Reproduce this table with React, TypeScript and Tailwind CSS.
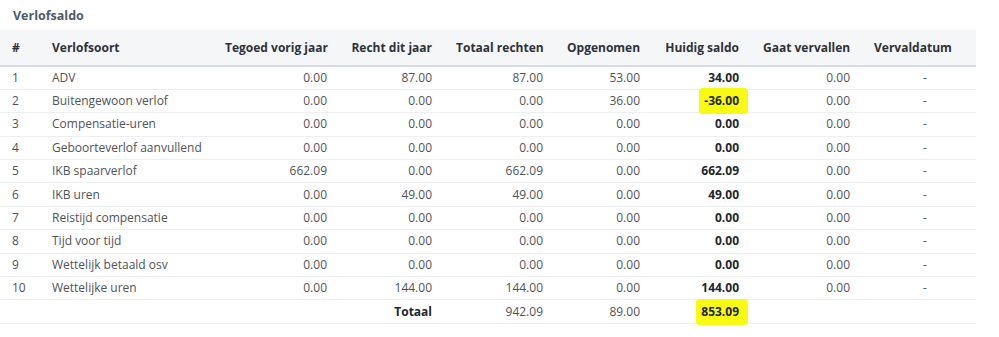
import React from "react";

type Row = {
  nr: number;
  soort: string;
  tegoed: string;
  recht: string;
  totaal: string;
  opgenomen: string;
  saldo: string;
  vervallen: string;
  mark?: boolean;
};

const rows: Row[] = [
  { nr: 1, soort: "ADV", tegoed: "0.00", recht: "87.00", totaal: "87.00", opgenomen: "53.00", saldo: "34.00", vervallen: "0.00" },
  { nr: 2, soort: "Buitengewoon verlof", tegoed: "0.00", recht: "0.00", totaal: "0.00", opgenomen: "36.00", saldo: "-36.00", vervallen: "0.00", mark: true },
  { nr: 3, soort: "Compensatie-uren", tegoed: "0.00", recht: "0.00", totaal: "0.00", opgenomen: "0.00", saldo: "0.00", vervallen: "0.00" },
  { nr: 4, soort: "Geboorteverlof aanvullend", tegoed: "0.00", recht: "0.00", totaal: "0.00", opgenomen: "0.00", saldo: "0.00", vervallen: "0.00" },
  { nr: 5, soort: "IKB spaarverlof", tegoed: "662.09", recht: "0.00", totaal: "662.09", opgenomen: "0.00", saldo: "662.09", vervallen: "0.00" },
  { nr: 6, soort: "IKB uren", tegoed: "0.00", recht: "49.00", totaal: "49.00", opgenomen: "0.00", saldo: "49.00", vervallen: "0.00" },
  { nr: 7, soort: "Reistijd compensatie", tegoed: "0.00", recht: "0.00", totaal: "0.00", opgenomen: "0.00", saldo: "0.00", vervallen: "0.00" },
  { nr: 8, soort: "Tijd voor tijd", tegoed: "0.00", recht: "0.00", totaal: "0.00", opgenomen: "0.00", saldo: "0.00", vervallen: "0.00" },
  { nr: 9, soort: "Wettelijk betaald osv", tegoed: "0.00", recht: "0.00", totaal: "0.00", opgenomen: "0.00", saldo: "0.00", vervallen: "0.00" },
  { nr: 10, soort: "Wettelijke uren", tegoed: "0.00", recht: "144.00", totaal: "144.00", opgenomen: "0.00", saldo: "144.00", vervallen: "0.00" },
];

// yellow marker highlight, as in the screenshot
function Marker({ children }: { children: React.ReactNode }) {
  return (
    <span className="relative inline-block">
      <span className="absolute -left-[5px] -right-[9px] -top-[4px] -bottom-[4px] rounded-[4px] bg-[#f8fa14]" />
      <span className="relative">{children}</span>
    </span>
  );
}

export default function App() {
  return (
    <div className="w-[999px] h-[337px] bg-white font-['Open_Sans',sans-serif] text-[12px]">
      <div className="pl-[13px] pt-[7px] h-[30px] font-bold text-[12.5px] text-[#4d5b6b]">Verlofsaldo</div>

      <table className="w-[976px] table-fixed border-collapse">
        <colgroup>
          <col className="w-[40px]" />
          <col className="w-[173px]" />
          <col className="w-[126px]" />
          <col className="w-[105px]" />
          <col className="w-[111px]" />
          <col className="w-[97px]" />
          <col className="w-[99px]" />
          <col className="w-[111px]" />
          <col className="w-[114px]" />
        </colgroup>
        <thead>
          <tr className="h-[36px] bg-[#f5f6f8] border-b-2 border-[#d6dbe1] text-[#2e3238] whitespace-nowrap">
            <th className="px-3 text-left font-bold">#</th>
            <th className="px-3 text-left font-bold">Verlofsoort</th>
            <th className="px-3 text-right font-bold">Tegoed vorig jaar</th>
            <th className="px-3 text-right font-bold">Recht dit jaar</th>
            <th className="px-3 text-right font-bold">Totaal rechten</th>
            <th className="px-3 text-right font-bold">Opgenomen</th>
            <th className="px-3 text-right font-bold">Huidig saldo</th>
            <th className="px-3 text-right font-bold">Gaat vervallen</th>
            <th className="px-3 text-left font-bold">Vervaldatum</th>
          </tr>
        </thead>
        <tbody className="text-[#4f5358] whitespace-nowrap">
          {rows.map((r) => (
            <tr key={r.nr} className="h-[23.4px] border-b border-[#eceef1]">
              <td className="px-3">{r.nr}</td>
              <td className="px-3">{r.soort}</td>
              <td className="px-3 text-right">{r.tegoed}</td>
              <td className="px-3 text-right">{r.recht}</td>
              <td className="px-3 text-right">{r.totaal}</td>
              <td className="px-3 text-right">{r.opgenomen}</td>
              <td className="px-3 text-right font-bold text-[#23262a]">
                {r.mark ? <Marker>{r.saldo}</Marker> : r.saldo}
              </td>
              <td className="px-3 text-right">{r.vervallen}</td>
              <td className="pl-6 pr-3 text-center">-</td>
            </tr>
          ))}
          <tr className="h-[23.4px] border-b border-[#eceef1]">
            <td className="px-3"></td>
            <td className="px-3"></td>
            <td className="px-3"></td>
            <td className="px-3 text-right font-bold text-[#23262a]">Totaal</td>
            <td className="px-3 text-right">942.09</td>
            <td className="px-3 text-right">89.00</td>
            <td className="px-3 text-right font-bold text-[#23262a]">
              <Marker>853.09</Marker>
            </td>
            <td className="px-3"></td>
            <td className="px-3"></td>
          </tr>
        </tbody>
      </table>
    </div>
  );
}
